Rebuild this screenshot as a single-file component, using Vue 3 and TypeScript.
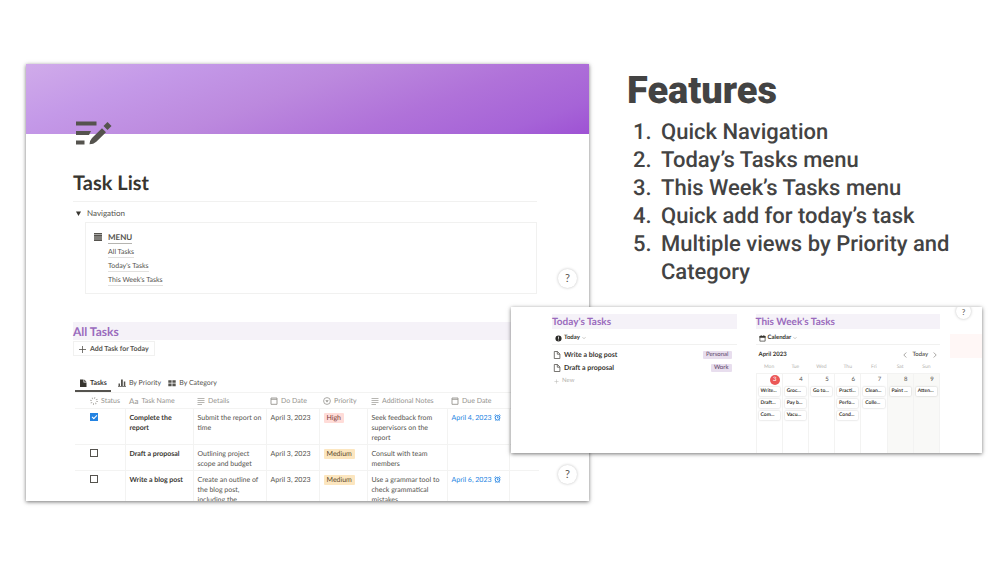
<script setup lang="ts">
interface TaskRow {
  done: boolean
  name: string
  details: string
  doDate: string
  priority: 'High' | 'Medium'
  notes: string
  due: string
}

interface Day {
  label: string
  date: number
  items: string[]
}

const features: string[] = [
  'Quick Navigation',
  'Today’s Tasks menu',
  'This Week’s Tasks menu',
  'Quick add for today’s task',
  'Multiple views by Priority and Category',
]

const menuLinks: string[] = ['All Tasks', "Today's Tasks", "This Week's Tasks"]

const tasks: TaskRow[] = [
  {
    done: true,
    name: 'Complete the report',
    details: 'Submit the report on time',
    doDate: 'April 3, 2023',
    priority: 'High',
    notes: 'Seek feedback from supervisors on the report',
    due: 'April 4, 2023',
  },
  {
    done: false,
    name: 'Draft a proposal',
    details: 'Outlining project scope and budget',
    doDate: 'April 3, 2023',
    priority: 'Medium',
    notes: 'Consult with team members',
    due: '',
  },
  {
    done: false,
    name: 'Write a blog post',
    details: 'Create an outline of the blog post, including the',
    doDate: 'April 3, 2023',
    priority: 'Medium',
    notes: 'Use a grammar tool to check grammatical mistakes',
    due: 'April 6, 2023',
  },
]

const todayTasks = [
  { name: 'Write a blog post', tag: 'Personal' },
  { name: 'Draft a proposal', tag: 'Work' },
]

const days: Day[] = [
  { label: 'Mon', date: 3, items: ['Write...', 'Draft...', 'Com...'] },
  { label: 'Tue', date: 4, items: ['Groc...', 'Pay b...', 'Vacu...'] },
  { label: 'Wed', date: 5, items: ['Go to...'] },
  { label: 'Thu', date: 6, items: ['Practi...', 'Perfo...', 'Cond...'] },
  { label: 'Fri', date: 7, items: ['Clean...', 'Colle...'] },
  { label: 'Sat', date: 8, items: ['Paint ...'] },
  { label: 'Sun', date: 9, items: ['Atten...'] },
]
</script>

<template>
  <main class="slide">
    <section class="window list-window">
      <div class="cover"></div>
      <div class="page">
        <svg class="page-icon" viewBox="0 0 36 24" aria-hidden="true">
          <path fill="#55534e" d="M0 .5h20.500v4H0zM0 10h15l-2 4H0zM0 19.500h8.500v4H0zM13.500 23.300q.3-4 2.500-6.300L26 7.200l4 4-9.700 9.500q-2.800 2.600-6.800 2.600zM27.500 5L31.500 1l4 4-4 4z" />
        </svg>
        <h2 class="page-title">Task List</h2>
        <details class="nav" open>
          <summary>
            <svg viewBox="0 0 6 6" aria-hidden="true"><path d="M0 .5h6L3 6z" fill="#37352f" /></svg>
            <span>Navigation</span>
          </summary>
          <nav class="menu">
            <svg class="menu-icon" viewBox="0 0 8 8" aria-hidden="true">
              <path d="M0 0h8v1.600H0zM0 2.100h8v1.600H0zM0 4.200h8v1.600H0zM0 6.300h8V8H0z" fill="#55534e" />
            </svg>
            <div class="menu-list">
              <a class="menu-head" href="#menu">MENU</a>
              <a v-for="link in menuLinks" :key="link" href="#tasks">{{ link }}</a>
            </div>
          </nav>
        </details>

        <h3 id="tasks" class="band">All Tasks</h3>
        <button class="add" type="button">
          <svg viewBox="0 0 7 7" aria-hidden="true"><path d="M3.500 0v7M0 3.500h7" stroke="#55534e" stroke-width=".8" /></svg>
          Add Task for Today
        </button>

        <div class="tabs">
          <button type="button" class="active">
            <svg viewBox="0 0 8 8" aria-hidden="true"><path d="M1 .5h3.500v3H7.500V8H1zM5.200.500l2.300 2.300H5.200z" fill="#37352f" /></svg>
            Tasks
          </button>
          <button type="button">
            <svg viewBox="0 0 8 8" aria-hidden="true"><path d="M.5 4.500h1.500V7H.500zM3 .5h1.800V7H3zM5.800 2.500h1.500V7H5.800zM0 7.300h8V8H0z" fill="#55534e" /></svg>
            By Priority
          </button>
          <button type="button">
            <svg viewBox="0 0 8 8" aria-hidden="true"><path d="M.300 1.200h3.300V3.800H.300zM4.400 1.200h3.300V3.800H4.400zM.300 4.600h3.300V7.200H.300zM4.400 4.600h3.300V7.200H4.400z" fill="#55534e" /></svg>
            By Category
          </button>
        </div>

        <table class="tasks">
          <colgroup>
            <col class="c-status" /><col class="c-name" /><col class="c-details" /><col class="c-do" />
            <col class="c-priority" /><col class="c-notes" /><col class="c-due" /><col />
          </colgroup>
          <thead>
            <tr>
              <th class="status">
                <span>
                  <svg viewBox="0 0 8 8" aria-hidden="true"><circle cx="4" cy="4" r="3" fill="none" stroke="#a5a39e" stroke-width="1.800" stroke-dasharray=".8 1.556" /></svg>Status
                </span>
              </th>
              <th><span><i class="aa">Aa</i>Task Name</span></th>
              <th>
                <span><svg viewBox="0 0 8 8" aria-hidden="true"><path d="M.500 1.500h7M.500 3.500h7M.500 5.500h7M.500 7.500h4.500" stroke="#a5a39e" stroke-width=".8" /></svg>Details</span>
              </th>
              <th>
                <span><svg viewBox="0 0 8 8" aria-hidden="true"><path d="M1 1h6v6.300H1zM1 2.300h6" fill="none" stroke="#96948f" stroke-width=".9" /></svg>Do Date</span>
              </th>
              <th>
                <span><svg viewBox="0 0 8 8" aria-hidden="true"><circle cx="4" cy="4" r="3.400" fill="none" stroke="#96948f" stroke-width=".8" /><path d="M2.300 3.200h3.400L4 5.500z" fill="#96948f" /></svg>Priority</span>
              </th>
              <th>
                <span><svg viewBox="0 0 8 8" aria-hidden="true"><path d="M.500 1.500h7M.500 3.500h7M.500 5.500h7M.500 7.500h4.500" stroke="#a5a39e" stroke-width=".8" /></svg>Additional Notes</span>
              </th>
              <th>
                <span><svg viewBox="0 0 8 8" aria-hidden="true"><path d="M1 1h6v6.300H1zM1 2.300h6" fill="none" stroke="#96948f" stroke-width=".9" /></svg>Due Date</span>
              </th>
              <th></th>
            </tr>
          </thead>
          <tbody>
            <tr v-for="task in tasks" :key="task.name">
              <td class="status"><input type="checkbox" :checked="task.done" :aria-label="task.name" /></td>
              <td class="name"><a href="#task">{{ task.name }}</a></td>
              <td>{{ task.details }}</td>
              <td>{{ task.doDate }}</td>
              <td><span class="pill" :class="task.priority.toLowerCase()">{{ task.priority }}</span></td>
              <td>{{ task.notes }}</td>
              <td class="due">
                <template v-if="task.due">
                  {{ task.due }}
                  <svg viewBox="0 0 8 8" aria-hidden="true">
                    <circle cx="4" cy="4.300" r="2.700" fill="none" stroke="#2383e2" stroke-width="1.100" />
                    <path d="M4 2.800v1.700h1.200M.6 1.800L2 .6M7.400 1.800L6 .6M1.700 7.500l.8-.8M6.300 7.500l-.8-.8" fill="none" stroke="#2383e2" stroke-width="1" />
                  </svg>
                </template>
              </td>
              <td></td>
            </tr>
          </tbody>
        </table>
      </div>
      <button class="help help-mid" type="button" aria-label="Help with navigation">?</button>
      <button class="help help-low" type="button" aria-label="Help with tasks">?</button>
    </section>

    <div class="side">
      <section class="features">
        <h1>Features</h1>
        <ol>
          <li v-for="feature in features" :key="feature">{{ feature }}</li>
        </ol>
      </section>

      <section class="window day-window">
        <section class="pane">
          <h3 class="band small">Today's Tasks</h3>
          <button class="view" type="button">
            <svg class="lead" viewBox="0 0 8 8" aria-hidden="true"><circle cx="4" cy="4" r="3.500" fill="#2b2a27" /><path d="M4 1.800v2.600M4 5.200v1" stroke="#fff" stroke-width=".9" /></svg>
            Today
            <svg class="chev" viewBox="0 0 4 4" aria-hidden="true"><path d="M.5 1.200L2 2.700l1.500-1.500" fill="none" stroke="#a5a39e" stroke-width=".6" /></svg>
          </button>
          <ul class="today">
            <li v-for="item in todayTasks" :key="item.name">
              <svg viewBox="0 0 8 8" aria-hidden="true"><path d="M1.300.500h3.200L6.900 3v4.500H1.300zM4.300.500V3.200h2.600" fill="none" stroke="#55534e" stroke-width=".8" /></svg>
              <a href="#task">{{ item.name }}</a>
              <span class="tag">{{ item.tag }}</span>
            </li>
          </ul>
          <button class="new" type="button">
            <svg viewBox="0 0 6 6" aria-hidden="true"><path d="M3 .5v5M.5 3h5" stroke="#b5b4b0" stroke-width=".6" /></svg>
            New
          </button>
        </section>

        <section class="pane">
          <h3 class="band small">This Week's Tasks</h3>
          <button class="view" type="button">
            <svg class="lead" viewBox="0 0 8 8" aria-hidden="true"><path d="M1 1.500h6v5.500H1z" fill="none" stroke="#37352f" stroke-width=".8" /><path d="M.6 1h6.800v2H.6zM2 .3h1v1H2zM5 .3h1v1H5z" fill="#37352f" /></svg>
            Calendar
            <svg class="chev" viewBox="0 0 4 4" aria-hidden="true"><path d="M.5 1.200L2 2.700l1.500-1.500" fill="none" stroke="#a5a39e" stroke-width=".6" /></svg>
          </button>
          <div class="month">
            <strong>April 2023</strong>
            <button type="button" aria-label="Previous week">
              <svg viewBox="0 0 4 6" aria-hidden="true"><path d="M3.300.500L.8 3l2.500 2.500" fill="none" stroke="#85837e" stroke-width=".7" /></svg>
            </button>
            <button type="button">Today</button>
            <button type="button" aria-label="Next week">
              <svg viewBox="0 0 4 6" aria-hidden="true"><path d="M.7.500L3.200 3 .7 5.500" fill="none" stroke="#85837e" stroke-width=".7" /></svg>
            </button>
          </div>
          <table class="calendar">
            <thead>
              <tr><th v-for="day in days" :key="day.label">{{ day.label }}</th></tr>
            </thead>
            <tbody>
              <tr>
                <td v-for="day in days" :key="day.date" :class="{ weekend: day.date > 7 }">
                  <span class="date" :class="{ current: day.date === 3 }">{{ day.date }}</span>
                  <a v-for="item in day.items" :key="item" class="event" href="#task">{{ item }}</a>
                </td>
              </tr>
            </tbody>
          </table>
        </section>
        <div class="peek"></div>
        <button class="help help-top" type="button" aria-label="Help with calendar">?</button>
      </section>
    </div>
  </main>
</template>

<style>
body {
  margin: 0;
  background: #fff;
}
</style>

<style scoped>
* {
  box-sizing: border-box;
}

.slide {
  display: grid;
  grid-template-columns: minmax(0, 563fr) minmax(0, 355fr);
  gap: 38px;
  min-height: 100vh;
  padding: 64px 23px 64px 26px;
  background: #fff;
  color: #55534e;
  font-family: Lato, "Open Sans", sans-serif;
  font-size: 7px;
  line-height: 10px;
  text-rendering: geometricPrecision;
}

h1, h2, h3, ol, ul {
  margin: 0;
  padding: 0;
}

button {
  padding: 0;
  border: 0;
  background: none;
  color: inherit;
  font: inherit;
  text-rendering: inherit;
  cursor: pointer;
}

a {
  color: inherit;
  text-decoration: none;
}

svg {
  flex: none;
}

.window {
  position: relative;
  overflow: hidden;
  background: #fff;
  box-shadow: 0 1px 4px rgba(0, 0, 0, 0.55);
}

.list-window {
  height: calc(100vh - 128px);
}

.cover {
  height: 70px;
  background: linear-gradient(160deg, #d0abea 0%, #c499e8 22%, #bc89de 45%, #b072d9 68%, #a663d7 88%, #9e52d4 100%);
}

.page {
  padding: 0 52px 0 47px;
}

.page-icon {
  position: relative;
  display: block;
  width: 36px;
  height: 24px;
  margin: -13px 0 0 3px;
}

.page-title {
  margin-top: 26px;
  padding-bottom: 6px;
  border-bottom: 1px solid #f1f1f0;
  color: #37352f;
  font-size: 20px;
  line-height: 24px;
}

.nav summary {
  display: flex;
  align-items: center;
  gap: 6px;
  margin: 6px 0 4px 3px;
  font-size: 8px;
  list-style: none;
}

.nav summary svg {
  width: 5px;
  height: 5px;
}

.menu {
  display: flex;
  gap: 6px;
  margin-left: 12px;
  padding: 9px 8px 7px;
  border: 1px solid #f1f1f0;
}

.menu-icon {
  width: 8px;
  height: 8px;
  margin-top: 1px;
}

.menu-list {
  display: flex;
  flex-direction: column;
  align-items: flex-start;
  gap: 4px;
}

.menu-list a {
  border-bottom: 1px solid #e2e1df;
  line-height: 9px;
}

.menu-list .menu-head {
  border-color: #b5b4b0;
  font-size: 8px;
  font-weight: 700;
  line-height: 11px;
}

.band {
  margin-top: 28px;
  padding-top: 1px;
  background: #f5f2f8;
  color: #9a6bbd;
  font-size: 12px;
  font-weight: 700;
  line-height: 17px;
}

.add {
  display: flex;
  align-items: center;
  gap: 4px;
  height: 15px;
  margin-top: 1px;
  padding: 1px 5px 0;
  border: 1px solid #f1f1f0;
  font-weight: 700;
}

.add svg {
  width: 7px;
  height: 7px;
}

.tabs {
  display: flex;
  gap: 7px;
  margin: 20px 0 0 2px;
}

.tabs button {
  display: flex;
  align-items: center;
  gap: 3px;
  height: 16px;
  border-bottom: 2px solid transparent;
}

.tabs .active {
  padding: 0 4px;
  border-color: #55534e;
  color: #37352f;
  font-weight: 700;
}

.tabs svg {
  width: 8px;
  height: 8px;
}

.tasks {
  width: 100%;
  margin-left: 2px;
  border-collapse: collapse;
  table-layout: fixed;
}

.c-status { width: 50px; }
.c-name { width: 68px; }
.c-details { width: 73px; }
.c-do { width: 53px; }
.c-priority { width: 48px; }
.c-notes { width: 80px; }
.c-due { width: 62px; }

.tasks th,
.tasks td {
  padding: 3px 0 2px 4px;
  border: 1px solid #f3f3f2;
  border-left: 0;
  text-align: left;
  vertical-align: top;
}

.tasks th {
  border-right: 0;
  color: #96948f;
  font-weight: 400;
}

.tasks td {
  padding-top: 4px;
  padding-bottom: 1px;
}

.tasks td:last-child {
  border-right: 0;
}

.tasks .name {
  padding-right: 4px;
}

.tasks .status {
  padding-left: 15px;
}

.tasks th span {
  display: flex;
  align-items: center;
  gap: 3px;
  white-space: nowrap;
}

.tasks th svg {
  width: 8px;
  height: 8px;
}

.aa {
  font-size: 8px;
  font-style: normal;
}

.tasks input {
  display: block;
  width: 8px;
  height: 8px;
  margin: 0;
  appearance: none;
  border: 1px solid #55534e;
}

.tasks input:checked {
  border-color: #2383e2;
  background: #2383e2;
}

.tasks input:checked::after {
  display: block;
  width: 4px;
  height: 2px;
  margin: 1px;
  border: solid #fff;
  border-width: 0 0 1px 1px;
  transform: rotate(-45deg);
  content: "";
}

.name a {
  color: #37352f;
  font-weight: 700;
}

.pill {
  display: inline-block;
  padding: 0 3px;
  border-radius: 1px;
}

.high {
  background: #ffdcd8;
  color: #7a3a36;
}

.medium {
  background: #fce6bf;
  color: #5e4a2c;
}

.due {
  color: #2383e2;
  white-space: nowrap;
}

.due svg {
  width: 7px;
  height: 7px;
  margin-left: 1px;
  vertical-align: -1px;
}

.help {
  position: absolute;
  right: 12px;
  width: 19px;
  height: 19px;
  border-radius: 50%;
  background: #fff;
  box-shadow: 0 0 3px rgba(0, 0, 0, 0.25);
  font-size: 11px;
}

.help-mid { top: 205px; }
.help-low { bottom: 17px; }

.side {
  display: flex;
  flex-direction: column;
}

.features {
  color: #434343;
  font-family: Roboto, "Liberation Sans", sans-serif;
}

.features h1 {
  margin-top: 5px;
  font-size: 38px;
  font-weight: 900;
  line-height: 44px;
}

.features ol {
  margin-top: 6px;
  padding-left: 30px;
  font-size: 22px;
  font-weight: 500;
  line-height: 28px;
}

.features li {
  padding-left: 4px;
}

.day-window {
  display: grid;
  grid-template-columns: 1fr 1fr;
  gap: 19px;
  margin: 20px 0 0 -116px;
  padding: 7px 42px 0 41px;
  font-size: 6px;
  line-height: 8px;
}

.small {
  margin-top: 0;
  font-size: 10px;
  line-height: 14px;
}

.view {
  display: flex;
  align-items: center;
  gap: 2px;
  width: 100%;
  height: 16px;
  padding: 3px 3px 0;
  border-bottom: 1px solid #f1f1f0;
  color: #37352f;
  font-weight: 700;
}

.lead {
  width: 7px;
  height: 7px;
}

.chev {
  width: 4px;
  height: 4px;
}

.today {
  display: grid;
  gap: 5px;
  margin-top: 6px;
  list-style: none;
}

.today li {
  display: flex;
  align-items: center;
  gap: 3px;
  padding: 0 5px 0 1px;
  color: #37352f;
  font-size: 7px;
  font-weight: 700;
}

.today svg {
  width: 8px;
  height: 8px;
}

.tag {
  margin-left: auto;
  padding: 0 3px;
  border-radius: 1px;
  background: #e8deee;
  color: #5c4569;
  font-size: 6px;
  font-weight: 400;
}

.new {
  display: flex;
  align-items: center;
  gap: 3px;
  margin: 5px 0 0 2px;
  color: #b5b4b0;
}

.new svg {
  width: 5px;
  height: 5px;
}

.month {
  display: flex;
  align-items: center;
  gap: 5px;
  margin-top: 6px;
  padding: 0 3px;
  color: #37352f;
}

.month strong {
  margin-right: auto;
  font-weight: 700;
}

.month button {
  display: flex;
}

.month svg {
  width: 4px;
  height: 6px;
}

.calendar {
  width: 100%;
  margin-top: 4px;
  border-collapse: collapse;
  table-layout: fixed;
}

.calendar th {
  padding: 0 0 2px;
  color: #b5b4b0;
  font-size: 5px;
  font-weight: 400;
}

.calendar td {
  height: 79px;
  padding: 1px 2px 0;
  border: 1px solid #f3f3f2;
  border-bottom: 0;
  vertical-align: top;
}

.weekend {
  background: #f9f9f7;
}

.date {
  display: block;
  width: 10px;
  height: 10px;
  margin: 0 0 2px auto;
  border-radius: 50%;
  line-height: 10px;
  text-align: center;
}

.current {
  background: #eb5757;
  color: #fff;
}

.event {
  display: block;
  height: 9px;
  margin-bottom: 3px;
  padding-left: 2px;
  border-radius: 1px;
  background: #fff;
  box-shadow: 0 0 2px rgba(0, 0, 0, 0.25);
  color: #37352f;
  font-size: 5px;
  font-weight: 700;
  line-height: 9px;
  white-space: nowrap;
}

.peek {
  position: absolute;
  top: 27px;
  right: 0;
  width: 32px;
  height: 24px;
  background: #fff7f6;
}

.help-top {
  top: -3px;
  right: 11px;
  width: 15px;
  height: 15px;
  font-size: 8px;
}
</style>
